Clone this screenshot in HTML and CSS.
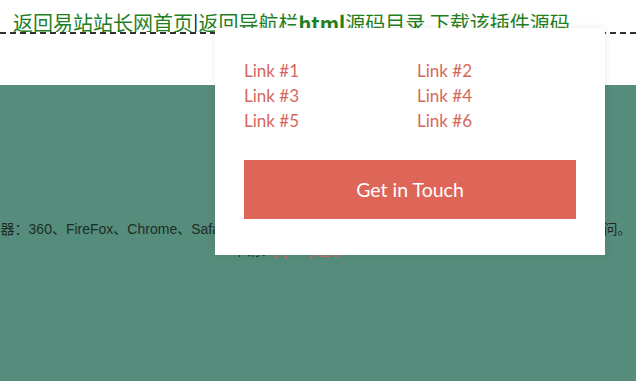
FILE: index.html
```html
<!DOCTYPE html>
<html lang="zh-CN">
<head>
<meta charset="utf-8">
<title>Dropdown</title>
<link rel="stylesheet" href="styles.css">
</head>
<body>
<header class="top">
  <div class="nav-line">
    <a class="nav-link" href="#">返回易站站长网首页</a><span class="sep">|</span><a class="nav-link" href="#">返回导航栏<b>html</b>源码目录</a> <a class="nav-link" href="#">下载该插件源码</a>
  </div>
</header>
<main class="stage">
  <div class="info">
    <p class="info-line">适用浏览器：360、FireFox、Chrome、Safari、Opera、傲游、搜狗、世界之窗. 不支持IE8及以下浏览器访问。</p>
    <p class="info-line">申请：<a class="info-link" href="#">jQuery之家</a></p>
  </div>
</main>
<div class="dropdown">
  <ul class="links">
    <li><a href="#">Link #1</a></li>
    <li><a href="#">Link #2</a></li>
    <li><a href="#">Link #3</a></li>
    <li><a href="#">Link #4</a></li>
    <li><a href="#">Link #5</a></li>
    <li><a href="#">Link #6</a></li>
  </ul>
  <a class="cta" href="#">Get in Touch</a>
</div>
</body>
</html>
```
FILE: styles.css
```css
html, body {
  margin: 0;
  padding: 0;
}
body {
  width: 636px;
  height: 381px;
  overflow: hidden;
  background: #568c7b;
  font-family: "Liberation Sans", "Noto Sans CJK SC", sans-serif;
}
.top {
  height: 85px;
  background: #ffffff;
}
.nav-line {
  padding: 13px 0 0 13px;
  height: 19px;
  line-height: 20px;
  font-size: 20px;
  font-family: "Noto Sans CJK SC", sans-serif;
  border-bottom: 2px dashed #333;
  white-space: nowrap;
  overflow: hidden;
}
.nav-link {
  color: #1f801f;
  text-decoration: none;
}
.sep {
  color: #111;
}
.stage {
  height: 296px;
}
.info {
  display: flex;
  flex-direction: column;
  align-items: center;
  padding: 134px 60px 0 0;
}
.info-line {
  margin: 0;
  white-space: nowrap;
  font-size: 14px;
  line-height: 21px;
  color: #1c2c26;
}
.info-link {
  color: #d7675d;
  text-decoration: none;
}
.dropdown {
  position: absolute;
  top: 28px;
  left: 215px;
  width: 332px;
  height: 163px;
  padding: 30px 29px 34px 29px;
  background: #ffffff;
  box-shadow: 0 0 8px rgba(0, 0, 0, 0.08);
  font-family: Lato, "Open Sans", sans-serif;
}
.links {
  list-style: none;
  margin: 0;
  padding: 0;
  display: grid;
  grid-template-columns: 173px 1fr;
}
.links li {
  height: 25px;
  line-height: 25px;
  font-size: 17px;
}
.links a {
  color: #d7675d;
  text-decoration: none;
}
.cta {
  display: flex;
  align-items: center;
  justify-content: center;
  margin-top: 27px;
  height: 59px;
  background: #dd6658;
  color: #ffffff;
  font-size: 19.5px;
  text-decoration: none;
}
```
